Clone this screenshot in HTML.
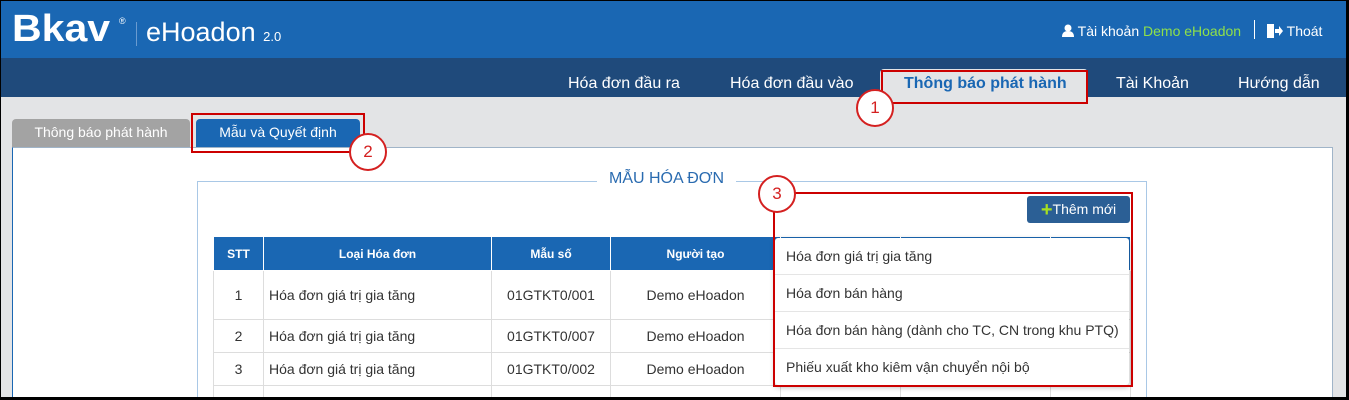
<!DOCTYPE html>
<html><head><meta charset="utf-8"><style>
*{margin:0;padding:0;box-sizing:border-box}
html,body{width:1349px;height:400px;overflow:hidden}
body{background:#000;font-family:"Liberation Sans",Arial,sans-serif;position:relative}
.a{position:absolute}
.hdr{left:1px;top:1px;width:1345px;height:57px;background:#1a67b3}
.nav{left:1px;top:58px;width:1345px;height:39px;background:#1f4a7b}
.cnt{left:1px;top:97px;width:1345px;height:300px;background:#e3e4e6}
.nv{color:#fff;font-size:16px;top:75px}
.circ{width:38px;height:38px;border:2px solid #d42020;border-radius:50%;background:#fff;color:#d42020;font-size:17px;text-align:center;line-height:34px}
.red{border:2px solid #c00}
td,th{border:1px solid #ddd;font-size:14px;color:#333;height:33px;padding:0 5px}
th{background:#1a67b3;color:#fff;font-size:12px;border-color:#fff;height:34px}
.dd div{height:37px;line-height:37px;padding-left:11px;font-size:14px;color:#333;border-bottom:1px solid #e5e5e5}
.clip{left:1px;top:1px;width:1345px;height:396px;overflow:hidden}
</style></head><body>
<div class="a clip">
<div style="position:absolute;left:-1px;top:-1px;width:1349px;height:400px">
<div class="a hdr"></div>
<div class="a" style="left:12px;top:8px;color:#fff;font-size:38px;font-weight:bold;letter-spacing:0px;transform:scaleX(1.08);transform-origin:left">Bkav</div>
<div class="a" style="left:119px;top:16px;color:#fff;font-size:9px">®</div>
<div class="a" style="left:136px;top:22px;width:1px;height:24px;background:#6a9bd0"></div>
<div class="a" style="left:146px;top:17px;color:#fff;font-size:27px">eHoadon <span style="font-size:13px">2.0</span></div>
<div class="a" style="left:1062px;top:23px;color:#fff;font-size:14px"><svg width="12" height="13" viewBox="0 0 12 13" style="vertical-align:-1px"><circle cx="6" cy="4" r="3.5" fill="#fff"/><path d="M0 13 Q0 7 6 7 Q12 7 12 13Z" fill="#fff"/></svg> Tài khoản <span style="color:#8fe04a">Demo eHoadon</span></div>
<div class="a" style="left:1254px;top:20px;width:1px;height:19px;background:#fff"></div>
<div class="a" style="left:1267px;top:23px;color:#fff;font-size:14px"><svg width="16" height="14" viewBox="0 0 16 14" style="vertical-align:-2px"><rect x="0" y="0" width="7" height="14" fill="#fff"/><path d="M8 5h4V2l4 5-4 5V9H8z" fill="#fff"/></svg> Thoát</div>
<div class="a nav"></div>
<div class="a nv" style="left:568px">Hóa đơn đầu ra</div>
<div class="a nv" style="left:730px">Hóa đơn đầu vào</div>
<div class="a" style="left:880px;top:69px;width:208px;height:30px;background:#e3e4e6;border-radius:4px 4px 0 0"></div>
<div class="a nv" style="left:904px;color:#1a67b3;font-weight:bold">Thông báo phát hành</div>
<div class="a nv" style="left:1116px">Tài Khoản</div>
<div class="a nv" style="left:1238px">Hướng dẫn</div>
<div class="a cnt"></div>
<div class="a red" style="left:881px;top:70px;width:207px;height:34px"></div>
<div class="a" style="left:12px;top:119px;width:178px;height:29px;background:#a3a3a3;border-radius:4px 4px 0 0;color:#fff;font-size:14px;text-align:center;line-height:26px">Thông báo phát hành</div>
<div class="a" style="left:196px;top:119px;width:164px;height:29px;background:#1a67b3;border-radius:4px 4px 0 0;color:#fff;font-size:14px;text-align:center;line-height:26px">Mẫu và Quyết định</div>
<div class="a" style="left:12px;top:147px;width:1321px;height:260px;background:#fff;border:1px solid #a0b4c8;border-left-color:#1a67b3"></div>
<div class="a red" style="left:191px;top:113px;width:174px;height:40px"></div>
<div class="a" style="left:197px;top:181px;width:950px;height:230px;border:1px solid #a9c8e6"></div>
<div class="a" style="left:597px;top:170px;padding:0 12px;background:#fff;color:#2a6bb0;font-size:16px">MẪU HÓA ĐƠN</div>
<table class="a" style="left:213px;top:236px;border-collapse:collapse;width:918px">
<tr><th style="width:50px">STT</th><th style="width:228px">Loại Hóa đơn</th><th style="width:119px">Mẫu số</th><th style="width:170px">Người tạo</th><th style="width:120px"></th><th style="width:150px"></th><th></th></tr>
<tr style="height:49px"><td align=center>1</td><td>Hóa đơn giá trị gia tăng</td><td align=center>01GTKT0/001</td><td align=center>Demo eHoadon</td><td></td><td></td><td></td></tr>
<tr><td align=center>2</td><td>Hóa đơn giá trị gia tăng</td><td align=center>01GTKT0/007</td><td align=center>Demo eHoadon</td><td></td><td></td><td></td></tr>
<tr><td align=center>3</td><td>Hóa đơn giá trị gia tăng</td><td align=center>01GTKT0/002</td><td align=center>Demo eHoadon</td><td></td><td></td><td></td></tr>
<tr><td align=center>4</td><td>Hóa đơn giá trị gia tăng</td><td align=center>01GTKT0/005</td><td align=center>Demo eHoadon</td><td></td><td></td><td></td></tr>
</table>
<div class="a" style="left:1027px;top:196px;width:103px;height:27px;background:#2b5f95;border-radius:3px;color:#fff;font-size:14px;text-align:center;line-height:27px"><span style="color:#a8e020;font-size:20px;font-weight:bold;vertical-align:-2px">+</span>Thêm mới</div>
<div class="a dd" style="left:775px;top:238px;width:354px;height:147px;background:#fff;box-shadow:0 2px 6px rgba(0,0,0,.3);border-radius:3px">
<div>Hóa đơn giá trị gia tăng</div><div>Hóa đơn bán hàng</div><div>Hóa đơn bán hàng (dành cho TC, CN trong khu PTQ)</div><div style="border:0">Phiếu xuất kho kiêm vận chuyển nội bộ</div></div>
<div class="a red" style="left:773px;top:192px;width:360px;height:195px"></div>
<div class="a circ" style="left:856px;top:89px">1</div>
<div class="a circ" style="left:349px;top:133px">2</div>
<div class="a circ" style="left:758px;top:175px">3</div>
</div></div>
</body></html>
